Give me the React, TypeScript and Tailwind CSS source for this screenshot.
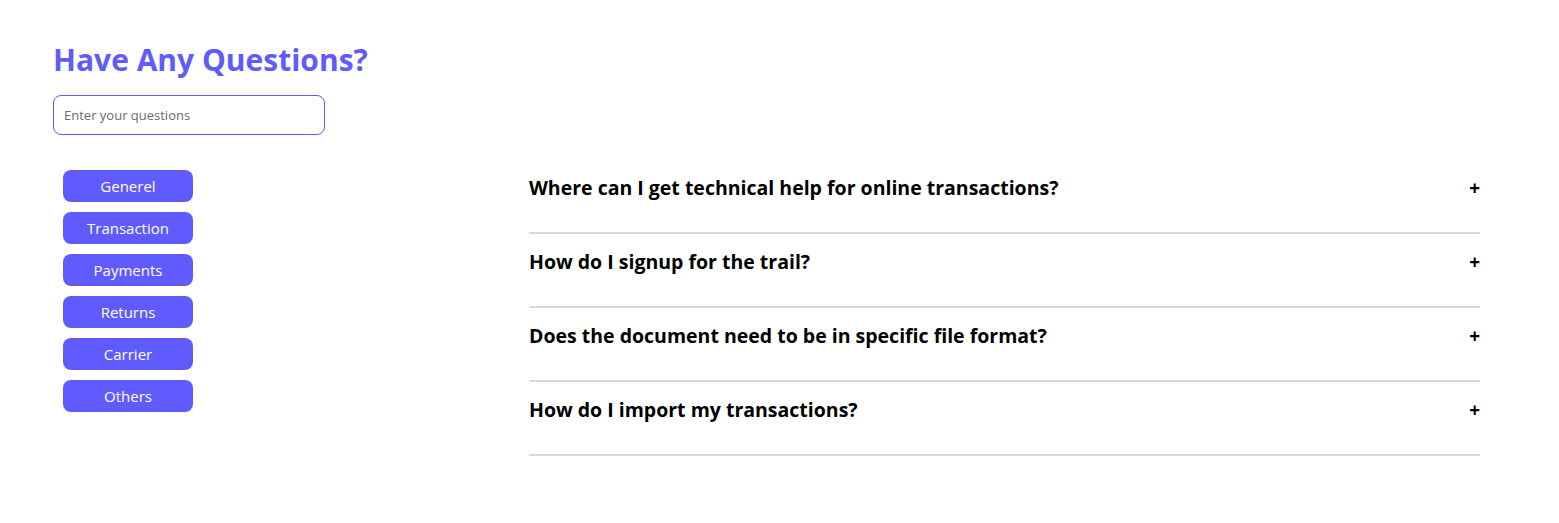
import React, { useState } from 'react';

const categories = ['Generel', 'Transaction', 'Payments', 'Returns', 'Carrier', 'Others'];

const faqs = [
  'Where can I get technical help for online transactions?',
  'How do I signup for the trail?',
  'Does the document need to be in specific file format?',
  'How do I import my transactions?',
];

export default function App() {
  const [open, setOpen] = useState<number | null>(null);

  return (
    <div className="min-h-screen bg-white font-['Open_Sans',sans-serif]">
      <div className="pl-[53px] pt-[40px]">
        <h1 className="text-[30px] font-bold leading-[40px] text-[#605bff]">Have Any Questions?</h1>
        <input
          type="text"
          placeholder="Enter your questions"
          className="mt-[15px] h-[40px] w-[272px] rounded-lg border border-[#605bff] px-[10px] text-[13px] text-gray-700 placeholder:text-[#6b6b6b] outline-none"
        />
      </div>

      <div className="flex pl-[53px] pt-[24px]">
        <div className="w-[476px] shrink-0 pl-[10px] pt-[11px]">
          <div className="flex flex-col gap-[10px]">
            {categories.map((c) => (
              <button
                key={c}
                className="h-[32px] w-[130px] rounded-lg bg-[#605bff] text-[15px] leading-[32px] text-white"
              >
                {c}
              </button>
            ))}
          </div>
        </div>

        <div className="mt-[1px] w-[951px]">
          {faqs.map((q, i) => (
            <div key={q} className="border-b-2 border-[#d9d9d9] pt-[15px] pb-[31px]">
              <button
                onClick={() => setOpen(open === i ? null : i)}
                className="flex w-full items-center justify-between text-left"
              >
                <span className="text-[19.5px] font-bold leading-[26px] text-black">{q}</span>
                <span className="text-[19px] font-bold leading-[26px] text-black">{open === i ? '−' : '+'}</span>
              </button>
            </div>
          ))}
        </div>
      </div>
    </div>
  );
}
